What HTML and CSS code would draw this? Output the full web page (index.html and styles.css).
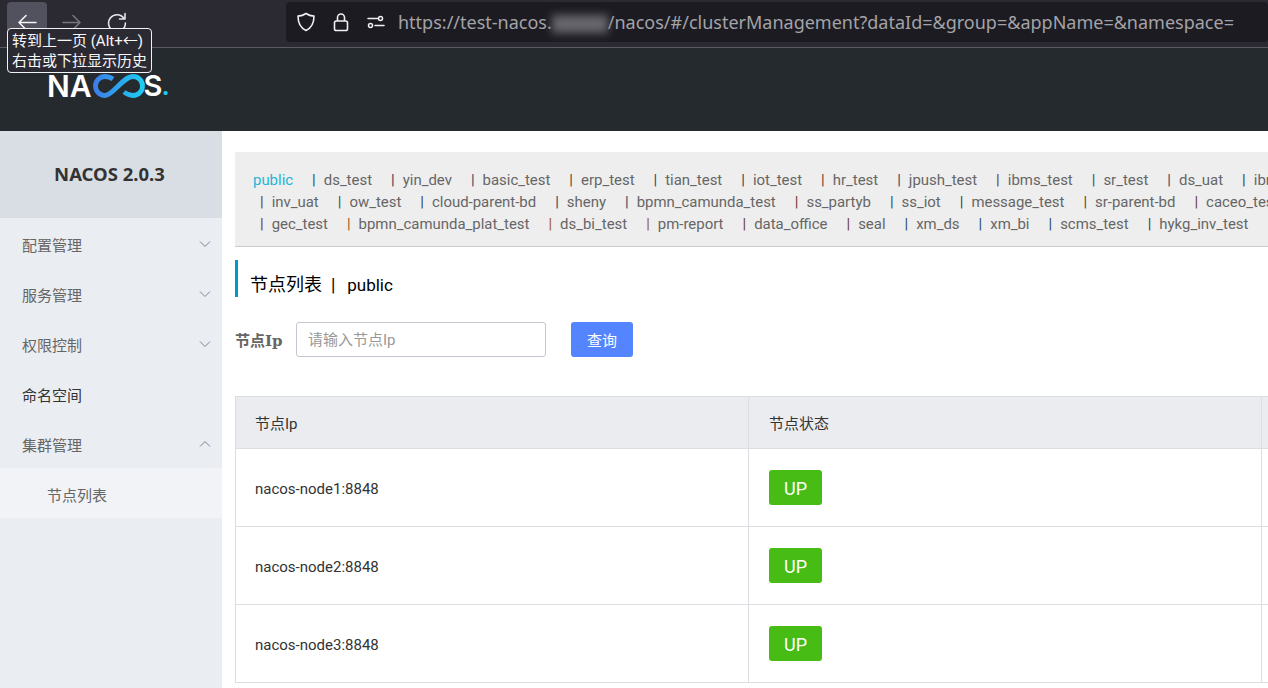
FILE: index.html
```html
<!DOCTYPE html>
<html lang="zh">
<head>
<meta charset="utf-8">
<title>Nacos</title>
<link rel="stylesheet" href="styles.css">
</head>
<body>
<div class="toolbar">
  <div class="nav-btn nav-btn-hover">
    <svg width="22" height="22" viewBox="0 0 22 22" fill="none" stroke="#f4f4f6" stroke-width="1.6" stroke-linecap="round" stroke-linejoin="round"><path d="M20 11.5H3M10 4.5 3 11.5l7 7"/></svg>
  </div>
  <div class="nav-btn">
    <svg width="22" height="22" viewBox="0 0 22 22" fill="none" stroke="#77767e" stroke-width="1.6" stroke-linecap="round" stroke-linejoin="round"><path d="M2 11.5h17M12 4.5l7 7-7 7"/></svg>
  </div>
  <div class="nav-btn">
    <svg width="22" height="22" viewBox="0 0 22 22" fill="none" stroke="#e4e4e8" stroke-width="1.6" stroke-linecap="round" stroke-linejoin="round"><path d="M18 7.5A8.4 8.4 0 1 0 19.4 12M19 2.5v5.5h-5.5"/></svg>
  </div>
  <div class="urlbar">
    <svg class="url-icon" width="20" height="20" viewBox="0 0 20 20" fill="none" stroke="#f0f0f2" stroke-width="1.6" stroke-linejoin="round"><path d="M10 1.5c2.500 1.700 5 2.400 8 2.600 0 6.500-1.500 11.500-8 14.400C3.500 15.600 2 10.600 2 4.100c3-.2 5.500-.9 8-2.600z"/></svg>
    <svg class="url-icon" width="20" height="20" viewBox="0 0 20 20" fill="none" stroke="#f0f0f2" stroke-width="1.6" stroke-linejoin="round"><rect x="3.500" y="9" width="13" height="9.500" rx="1.800"/><path d="M6.500 9V5.500a3.500 3.500 0 0 1 7 0V9"/></svg>
    <svg class="url-icon" width="20" height="20" viewBox="0 0 20 20" fill="none" stroke="#f0f0f2" stroke-width="1.500" stroke-linecap="round"><circle cx="14.500" cy="6.500" r="2"/><path d="M2 6.500h9.500M9 13.500h9"/><circle cx="4.500" cy="13.500" r="2"/></svg>
    <div class="url-text">https://test-nacos.<span class="url-redacted"></span>/nacos/#/clusterManagement?dataId=&amp;group=&amp;appName=&amp;namespace=</div>
  </div>
</div>
<div class="tooltip">转到上一页 (Alt+←)<br>右击或下拉显示历史</div>

<header class="top">
  <div class="logo">
    <span>NA</span><svg class="logo-mark" width="52" height="24" viewBox="0 0 52 24" fill="none" stroke-width="4.800"><defs><linearGradient id="lg" x1="0" x2="1" y1="0" y2="0"><stop offset="0" stop-color="#3d7fe8"/><stop offset="1" stop-color="#1ecbf2"/></linearGradient></defs><path stroke="url(#lg)" d="M20 5C17.500 3.300 15 2.500 12 2.500a9.500 9.500 0 0 0 0 19C20 21.500 30 2.500 40 2.500a9.500 9.500 0 0 1 0 19c-3.500 0-6.500-1.500-9-3.500"/></svg><span class="logo-s">S</span><span class="logo-dot">.</span>
  </div>
</header>

<div class="layout">
  <aside class="sidebar">
    <div class="version">NACOS 2.0.3</div>
    <div class="menu-item">配置管理<svg class="chev" width="12" height="8" viewBox="0 0 12 8" fill="none" stroke="#7f8690" stroke-width="1"><path d="M1 1.500l5 5 5-5"/></svg></div>
    <div class="menu-item">服务管理<svg class="chev" width="12" height="8" viewBox="0 0 12 8" fill="none" stroke="#7f8690" stroke-width="1"><path d="M1 1.500l5 5 5-5"/></svg></div>
    <div class="menu-item">权限控制<svg class="chev" width="12" height="8" viewBox="0 0 12 8" fill="none" stroke="#7f8690" stroke-width="1"><path d="M1 1.500l5 5 5-5"/></svg></div>
    <div class="menu-item menu-item-dark">命名空间</div>
    <div class="menu-item">集群管理<svg class="chev" width="12" height="8" viewBox="0 0 12 8" fill="none" stroke="#7f8690" stroke-width="1"><path d="M1 6.500l5-5 5 5"/></svg></div>
    <div class="menu-sub">节点列表</div>
  </aside>

  <main class="main">
    <div class="ns-box">
      <div class="ns-row ns-row-first">
        <span class="ns-active">public</span>
        <span class="ns"><i class="c1">|</i>ds_test</span>
        <span class="ns"><i class="c2">|</i>yin_dev</span>
        <span class="ns"><i class="c1">|</i>basic_test</span>
        <span class="ns"><i class="c3">|</i>erp_test</span>
        <span class="ns"><i class="c1">|</i>tian_test</span>
        <span class="ns"><i class="c2">|</i>iot_test</span>
        <span class="ns"><i class="c3">|</i>hr_test</span>
        <span class="ns"><i class="c1">|</i>jpush_test</span>
        <span class="ns"><i class="c3">|</i>ibms_test</span>
        <span class="ns"><i class="c1">|</i>sr_test</span>
        <span class="ns"><i class="c1">|</i>ds_uat</span>
        <span class="ns"><i class="c2">|</i>ibms_uat</span>
      </div>
      <div class="ns-row">
        <span class="ns"><i class="c3">|</i>inv_uat</span>
        <span class="ns"><i class="c1">|</i>ow_test</span>
        <span class="ns"><i class="c2">|</i>cloud-parent-bd</span>
        <span class="ns"><i class="c1">|</i>sheny</span>
        <span class="ns"><i class="c1">|</i>bpmn_camunda_test</span>
        <span class="ns"><i class="c3">|</i>ss_partyb</span>
        <span class="ns"><i class="c1">|</i>ss_iot</span>
        <span class="ns"><i class="c2">|</i>message_test</span>
        <span class="ns"><i class="c3">|</i>sr-parent-bd</span>
        <span class="ns"><i class="c3">|</i>caceo_test</span>
      </div>
      <div class="ns-row">
        <span class="ns"><i class="c3">|</i>gec_test</span>
        <span class="ns"><i class="c4">|</i>bpmn_camunda_plat_test</span>
        <span class="ns"><i class="c4">|</i>ds_bi_test</span>
        <span class="ns"><i class="c4">|</i>pm-report</span>
        <span class="ns"><i class="c3">|</i>data_office</span>
        <span class="ns"><i class="c3">|</i>seal</span>
        <span class="ns"><i class="c1">|</i>xm_ds</span>
        <span class="ns"><i class="c1">|</i>xm_bi</span>
        <span class="ns"><i class="c1">|</i>scms_test</span>
        <span class="ns"><i class="c2">|</i>hykg_inv_test</span>
      </div>
    </div>

    <h1 class="page-title">节点列表&nbsp; |&nbsp; <span class="title-ns">public</span></h1>

    <form class="search">
      <label class="search-label">节点Ip</label>
      <input class="search-input" type="text" placeholder="请输入节点Ip">
      <button class="search-btn" type="button">查询</button>
    </form>

    <table class="nodes">
      <thead>
        <tr><th>节点Ip</th><th>节点状态</th><th></th></tr>
      </thead>
      <tbody>
        <tr><td>nacos-node1:8848</td><td><span class="tag">UP</span></td><td></td></tr>
        <tr><td>nacos-node2:8848</td><td><span class="tag">UP</span></td><td></td></tr>
        <tr><td>nacos-node3:8848</td><td><span class="tag">UP</span></td><td></td></tr>
      </tbody>
    </table>
  </main>
</div>
</body>
</html>
```

FILE: styles.css
```css
* { box-sizing: border-box; }
html, body { margin: 0; height: 100%; overflow: hidden; }
body {
  width: 1268px;
  height: 688px;
  position: relative;
  background: #fff;
  font-family: Roboto, "Noto Sans CJK SC", sans-serif;
  color: #333;
}

/* browser toolbar */
.toolbar {
  height: 48px;
  background: #2b2a33;
  border-bottom: 1px solid #5b5b63;
  display: flex;
  align-items: flex-start;
  padding: 2px 0 0 7px;
  gap: 5px;
}
.nav-btn {
  width: 40px;
  height: 40px;
  border-radius: 4px;
  display: flex;
  align-items: center;
  justify-content: center;
}
.nav-btn-hover { background: #52525e; }
.urlbar {
  margin-left: 144px;
  width: 982px;
  height: 40px;
  background: #1c1b22;
  border-radius: 4px;
  display: flex;
  align-items: center;
  padding-left: 10px;
  gap: 15px;
  overflow: hidden;
}
.url-icon { flex: none; }
.url-text {
  font-family: "Noto Sans", sans-serif;
  font-size: 18px;
  color: #a3a3a8;
  white-space: nowrap;
  margin-left: -3px;
}
.url-redacted {
  display: inline-block;
  width: 56px;
  height: 18px;
  vertical-align: middle;
  background: #66666c;
  filter: blur(4px);
}
.tooltip {
  position: absolute;
  left: 7px;
  top: 28px;
  width: 145px;
  height: 45px;
  padding: 3px 0 0 4px;
  background: #2b2a33;
  border: 1px solid #f2f2f4;
  border-radius: 4px;
  color: #f8f8fa;
  font-size: 15px;
  line-height: 19.500px;
  white-space: nowrap;
  z-index: 5;
}

/* site header */
.top {
  height: 83px;
  background: #252a2f;
  padding: 25px 0 0 47px;
}
.logo {
  display: flex;
  align-items: center;
  height: 26px;
  color: #fff;
  font-family: Inter, sans-serif;
  font-weight: 600;
  font-size: 30px;
  line-height: 26px;
}
.logo-mark { margin: 0 -1px 0 1px; }
.logo-s { font-size: 29px; }
.logo-dot { color: #1ecbf2; margin-left: -1px; font-size: 26px; }

/* layout */
.layout {
  display: flex;
  height: 557px;
}
.sidebar {
  width: 222px;
  flex: none;
  background: #eaedf1;
}
.version {
  height: 87px;
  background: #d9dee4;
  display: flex;
  align-items: center;
  justify-content: center;
  padding: 0 3px 2px 0;
  font-family: "Noto Sans", sans-serif;
  font-size: 18.500px;
  font-weight: 700;
  color: #333;
}
.menu-item {
  height: 50px;
  padding: 2px 11px 0 22px;
  display: flex;
  align-items: center;
  justify-content: space-between;
  font-size: 15px;
  color: #666;
}
.menu-item-dark { color: #333; }
.chev { flex: none; }
.menu-sub {
  height: 50px;
  padding: 2px 0 0 47px;
  display: flex;
  align-items: center;
  background: #f2f3f7;
  font-size: 15px;
  color: #666;
}

/* main */
.main {
  flex: 1;
  min-width: 0;
  padding: 21px 0 0 13px;
  overflow: hidden;
}
.ns-box {
  width: 1100px;
  height: 95px;
  background: #eee;
  border-bottom: 1px solid #ccc;
  padding: 17px 0 0 18px;
  overflow: hidden;
}
.ns-row {
  display: flex;
  height: 22px;
  line-height: 22px;
  font-size: 14.950px;
  color: #666;
  white-space: nowrap;
  padding-left: 7px;
}
.ns-row-first { padding-left: 0; }
.ns-active { color: #1fb6d6; margin-right: 19px; }
.ns { margin-right: 19px; }
.ns i { font-style: normal; margin-right: 8px; }
.c1 { color: #2a4f68; }
.c2 { color: #333f52; }
.c3 { color: #6b3a30; }
.c4 { color: #a05a24; }

.page-title {
  margin: 13px 0 0;
  height: 37px;
  border-left: 3px solid #09c;
  padding-left: 12px;
  font-size: 18px;
  font-weight: 400;
  line-height: 50px;
  color: #000;
  white-space: nowrap;
}
.title-ns { font-size: 17px; margin-left: 3px; }
.search {
  display: flex;
  align-items: center;
  margin-top: 25px;
  height: 35px;
}
.search-label {
  width: 61px;
  font-family: "DejaVu Serif", "Noto Sans CJK SC", serif;
  font-weight: 700;
  font-size: 15px;
  color: #666;
}
.search-input {
  width: 250px;
  height: 35px;
  border: 1px solid #c4c6cf;
  border-radius: 3px;
  padding: 1px 11px 0;
  font-family: Roboto, "Noto Sans CJK SC", sans-serif;
  font-size: 15px;
  color: #333;
  background: #fff;
  outline: none;
}
.search-input::placeholder { color: #999; opacity: 1; }
.search-btn {
  margin-left: 25px;
  width: 62px;
  height: 35px;
  border: none;
  border-radius: 3px;
  background: #5584ff;
  color: #fff;
  font-family: Roboto, "Noto Sans CJK SC", sans-serif;
  font-size: 15px;
}
.nodes {
  margin-top: 39px;
  width: 1100px;
  border-collapse: collapse;
  table-layout: fixed;
  font-size: 15px;
}
.nodes th, .nodes td {
  border: 1px solid #dcdee3;
  padding: 0 19px;
  text-align: left;
  font-weight: 400;
}
.nodes th:nth-child(2), .nodes td:nth-child(2) { padding-left: 20px; }
.nodes td:nth-child(1) { padding-top: 2px; }
.nodes th:nth-child(1), .nodes th:nth-child(2) { width: 513px; }
.nodes th {
  height: 52px;
  background: #ebecf0;
  color: #333;
}
.nodes td {
  height: 78px;
  color: #333;
}
.tag {
  display: inline-block;
  vertical-align: middle;
  width: 53px;
  height: 35px;
  line-height: 37px;
  border-radius: 3px;
  background: #46bc15;
  color: #fff;
  text-align: center;
  font-size: 18px;
}
```
